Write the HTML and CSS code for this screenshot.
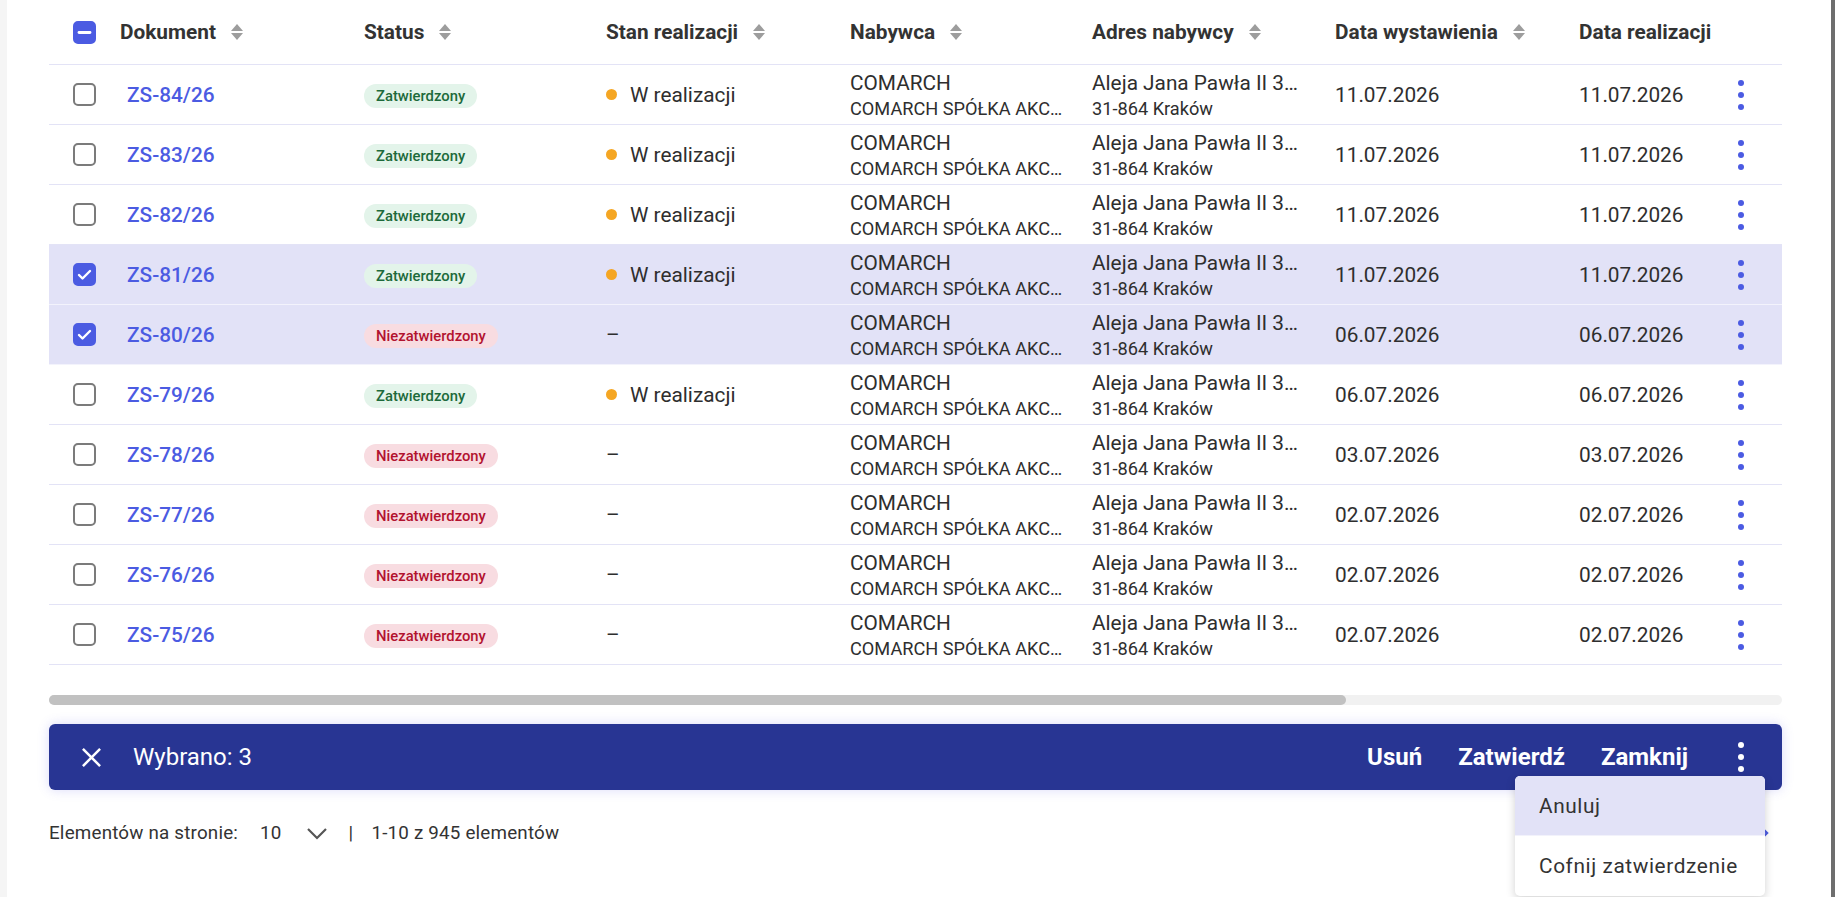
FILE: index.html
```html
<!DOCTYPE html>
<html lang="pl">
<head>
  <meta charset="UTF-8" />
  <meta name="viewport" content="width=device-width, initial-scale=1" />
  <title>Zamówienia sprzedaży</title>
  <link rel="stylesheet" href="styles.css">
</head>
<body>
<div class="page">
  <div class="side-left"></div>

  <main class="content">
    <div class="table">
      <div class="row head">
        <div class="cell check"><span class="cb partial"><svg viewBox="0 0 23 23"><path d="M6 11.5h11" /></svg></span></div>
        <div class="cell th">Dokument <svg class="sort" viewBox="0 0 14 20"><path d="M7 2l6 7H1z" /><path d="M7 18l6-7H1z" /></svg></div>
        <div class="cell th">Status <svg class="sort" viewBox="0 0 14 20"><path d="M7 2l6 7H1z" /><path d="M7 18l6-7H1z" /></svg></div>
        <div class="cell th">Stan realizacji <svg class="sort" viewBox="0 0 14 20"><path d="M7 2l6 7H1z" /><path d="M7 18l6-7H1z" /></svg></div>
        <div class="cell th">Nabywca <svg class="sort" viewBox="0 0 14 20"><path d="M7 2l6 7H1z" /><path d="M7 18l6-7H1z" /></svg></div>
        <div class="cell th">Adres nabywcy <svg class="sort" viewBox="0 0 14 20"><path d="M7 2l6 7H1z" /><path d="M7 18l6-7H1z" /></svg></div>
        <div class="cell th">Data wystawienia <svg class="sort" viewBox="0 0 14 20"><path d="M7 2l6 7H1z" /><path d="M7 18l6-7H1z" /></svg></div>
        <div class="cell th nowrap">Data realizacji</div>
        <div class="cell"></div>
      </div>

      <div class="row">
        <div class="cell check"><span class="cb"></span></div>
        <div class="cell"><a class="doc" href="#">ZS-84/26</a></div>
        <div class="cell"><span class="badge ok">Zatwierdzony</span></div>
        <div class="cell stan"><span class="dot"></span>W realizacji</div>
        <div class="cell two"><div class="main">COMARCH</div><div class="sub">COMARCH SPÓŁKA AKCYJNA</div></div>
        <div class="cell two"><div class="main">Aleja Jana Pawła II 39a</div><div class="sub">31-864 Kraków</div></div>
        <div class="cell date">11.07.2026</div>
        <div class="cell date">11.07.2026</div>
        <div class="cell kebab"><svg viewBox="0 0 6 30"><circle cx="3" cy="3" r="3" /><circle cx="3" cy="15" r="3" /><circle cx="3" cy="27" r="3" /></svg></div>
      </div>

      <div class="row">
        <div class="cell check"><span class="cb"></span></div>
        <div class="cell"><a class="doc" href="#">ZS-83/26</a></div>
        <div class="cell"><span class="badge ok">Zatwierdzony</span></div>
        <div class="cell stan"><span class="dot"></span>W realizacji</div>
        <div class="cell two"><div class="main">COMARCH</div><div class="sub">COMARCH SPÓŁKA AKCYJNA</div></div>
        <div class="cell two"><div class="main">Aleja Jana Pawła II 39a</div><div class="sub">31-864 Kraków</div></div>
        <div class="cell date">11.07.2026</div>
        <div class="cell date">11.07.2026</div>
        <div class="cell kebab"><svg viewBox="0 0 6 30"><circle cx="3" cy="3" r="3" /><circle cx="3" cy="15" r="3" /><circle cx="3" cy="27" r="3" /></svg></div>
      </div>

      <div class="row">
        <div class="cell check"><span class="cb"></span></div>
        <div class="cell"><a class="doc" href="#">ZS-82/26</a></div>
        <div class="cell"><span class="badge ok">Zatwierdzony</span></div>
        <div class="cell stan"><span class="dot"></span>W realizacji</div>
        <div class="cell two"><div class="main">COMARCH</div><div class="sub">COMARCH SPÓŁKA AKCYJNA</div></div>
        <div class="cell two"><div class="main">Aleja Jana Pawła II 39a</div><div class="sub">31-864 Kraków</div></div>
        <div class="cell date">11.07.2026</div>
        <div class="cell date">11.07.2026</div>
        <div class="cell kebab"><svg viewBox="0 0 6 30"><circle cx="3" cy="3" r="3" /><circle cx="3" cy="15" r="3" /><circle cx="3" cy="27" r="3" /></svg></div>
      </div>

      <div class="row selected">
        <div class="cell check"><span class="cb on"><svg viewBox="0 0 23 23"><path d="M6 12l3.5 3.5L17 8" /></svg></span></div>
        <div class="cell"><a class="doc" href="#">ZS-81/26</a></div>
        <div class="cell"><span class="badge ok">Zatwierdzony</span></div>
        <div class="cell stan"><span class="dot"></span>W realizacji</div>
        <div class="cell two"><div class="main">COMARCH</div><div class="sub">COMARCH SPÓŁKA AKCYJNA</div></div>
        <div class="cell two"><div class="main">Aleja Jana Pawła II 39a</div><div class="sub">31-864 Kraków</div></div>
        <div class="cell date">11.07.2026</div>
        <div class="cell date">11.07.2026</div>
        <div class="cell kebab"><svg viewBox="0 0 6 30"><circle cx="3" cy="3" r="3" /><circle cx="3" cy="15" r="3" /><circle cx="3" cy="27" r="3" /></svg></div>
      </div>

      <div class="row selected">
        <div class="cell check"><span class="cb on"><svg viewBox="0 0 23 23"><path d="M6 12l3.5 3.5L17 8" /></svg></span></div>
        <div class="cell"><a class="doc" href="#">ZS-80/26</a></div>
        <div class="cell"><span class="badge no">Niezatwierdzony</span></div>
        <div class="cell stan">–</div>
        <div class="cell two"><div class="main">COMARCH</div><div class="sub">COMARCH SPÓŁKA AKCYJNA</div></div>
        <div class="cell two"><div class="main">Aleja Jana Pawła II 39a</div><div class="sub">31-864 Kraków</div></div>
        <div class="cell date">06.07.2026</div>
        <div class="cell date">06.07.2026</div>
        <div class="cell kebab"><svg viewBox="0 0 6 30"><circle cx="3" cy="3" r="3" /><circle cx="3" cy="15" r="3" /><circle cx="3" cy="27" r="3" /></svg></div>
      </div>

      <div class="row">
        <div class="cell check"><span class="cb"></span></div>
        <div class="cell"><a class="doc" href="#">ZS-79/26</a></div>
        <div class="cell"><span class="badge ok">Zatwierdzony</span></div>
        <div class="cell stan"><span class="dot"></span>W realizacji</div>
        <div class="cell two"><div class="main">COMARCH</div><div class="sub">COMARCH SPÓŁKA AKCYJNA</div></div>
        <div class="cell two"><div class="main">Aleja Jana Pawła II 39a</div><div class="sub">31-864 Kraków</div></div>
        <div class="cell date">06.07.2026</div>
        <div class="cell date">06.07.2026</div>
        <div class="cell kebab"><svg viewBox="0 0 6 30"><circle cx="3" cy="3" r="3" /><circle cx="3" cy="15" r="3" /><circle cx="3" cy="27" r="3" /></svg></div>
      </div>

      <div class="row">
        <div class="cell check"><span class="cb"></span></div>
        <div class="cell"><a class="doc" href="#">ZS-78/26</a></div>
        <div class="cell"><span class="badge no">Niezatwierdzony</span></div>
        <div class="cell stan">–</div>
        <div class="cell two"><div class="main">COMARCH</div><div class="sub">COMARCH SPÓŁKA AKCYJNA</div></div>
        <div class="cell two"><div class="main">Aleja Jana Pawła II 39a</div><div class="sub">31-864 Kraków</div></div>
        <div class="cell date">03.07.2026</div>
        <div class="cell date">03.07.2026</div>
        <div class="cell kebab"><svg viewBox="0 0 6 30"><circle cx="3" cy="3" r="3" /><circle cx="3" cy="15" r="3" /><circle cx="3" cy="27" r="3" /></svg></div>
      </div>

      <div class="row">
        <div class="cell check"><span class="cb"></span></div>
        <div class="cell"><a class="doc" href="#">ZS-77/26</a></div>
        <div class="cell"><span class="badge no">Niezatwierdzony</span></div>
        <div class="cell stan">–</div>
        <div class="cell two"><div class="main">COMARCH</div><div class="sub">COMARCH SPÓŁKA AKCYJNA</div></div>
        <div class="cell two"><div class="main">Aleja Jana Pawła II 39a</div><div class="sub">31-864 Kraków</div></div>
        <div class="cell date">02.07.2026</div>
        <div class="cell date">02.07.2026</div>
        <div class="cell kebab"><svg viewBox="0 0 6 30"><circle cx="3" cy="3" r="3" /><circle cx="3" cy="15" r="3" /><circle cx="3" cy="27" r="3" /></svg></div>
      </div>

      <div class="row">
        <div class="cell check"><span class="cb"></span></div>
        <div class="cell"><a class="doc" href="#">ZS-76/26</a></div>
        <div class="cell"><span class="badge no">Niezatwierdzony</span></div>
        <div class="cell stan">–</div>
        <div class="cell two"><div class="main">COMARCH</div><div class="sub">COMARCH SPÓŁKA AKCYJNA</div></div>
        <div class="cell two"><div class="main">Aleja Jana Pawła II 39a</div><div class="sub">31-864 Kraków</div></div>
        <div class="cell date">02.07.2026</div>
        <div class="cell date">02.07.2026</div>
        <div class="cell kebab"><svg viewBox="0 0 6 30"><circle cx="3" cy="3" r="3" /><circle cx="3" cy="15" r="3" /><circle cx="3" cy="27" r="3" /></svg></div>
      </div>

      <div class="row">
        <div class="cell check"><span class="cb"></span></div>
        <div class="cell"><a class="doc" href="#">ZS-75/26</a></div>
        <div class="cell"><span class="badge no">Niezatwierdzony</span></div>
        <div class="cell stan">–</div>
        <div class="cell two"><div class="main">COMARCH</div><div class="sub">COMARCH SPÓŁKA AKCYJNA</div></div>
        <div class="cell two"><div class="main">Aleja Jana Pawła II 39a</div><div class="sub">31-864 Kraków</div></div>
        <div class="cell date">02.07.2026</div>
        <div class="cell date">02.07.2026</div>
        <div class="cell kebab"><svg viewBox="0 0 6 30"><circle cx="3" cy="3" r="3" /><circle cx="3" cy="15" r="3" /><circle cx="3" cy="27" r="3" /></svg></div>
      </div>
    </div>

    <!-- horizontal scroll of the table -->
    <div class="hscroll"><div class="thumb"></div></div>

    <!-- selection bar -->
    <div class="selbar">
      <svg class="close" viewBox="0 0 22 22"><path d="M2 2l18 18M20 2L2 20" /></svg>
      <span class="selcount">Wybrano: 3</span>
      <div class="actions">
        <button class="act">Usuń</button>
        <button class="act">Zatwierdź</button>
        <button class="act">Zamknij</button>
        <button class="act more"><svg viewBox="0 0 6 30"><circle cx="3" cy="3" r="3" /><circle cx="3" cy="15" r="3" /><circle cx="3" cy="27" r="3" /></svg></button>
      </div>

      <div class="menu">
        <div class="mi active">Anuluj</div>
        <div class="mi">Cofnij zatwierdzenie</div>
      </div>
    </div>

    <div class="footer">
      <span>Elementów na stronie:</span>
      <span class="per">10</span>
      <svg class="chev" viewBox="0 0 22 14"><path d="M2 3l9 9 9-9" /></svg>
      <span class="sep">|</span>
      <span class="range">1-10 z 945 elementów</span>
      <div class="pager">
        <span class="pg-text">Strona 1 z 95</span>
        <svg class="pg-next" viewBox="0 0 10 16"><path d="M2 2l6 6-6 6" /></svg>
      </div>
    </div>
  </main>

  <div class="side-right"></div>
</div>
</body>
</html>
```

FILE: styles.css
```css
body {
  margin: 0;
  font-family: Roboto, "Noto Sans", sans-serif;
  color: #2e2e2e;
  background: #fff;
}

.page {
  display: flex;
  height: 897px;
  overflow: hidden;
}
.side-left {
  width: 7px;
  background: #f5f5f5;
}
.side-right {
  width: 4px;
  background: #6e6e6e;
}
.content {
  flex: 1;
  padding: 0 49px 0 42px;
}

/* table */
.row {
  display: grid;
  grid-template-columns: 71px 244px 242px 244px 242px 243px 244px 136px 52px 1fr;
  align-items: center;
  height: 59px;
  border-bottom: 1px solid #e3e3f6;
  font-size: 20.8px;
}
.row.head {
  height: 64px;
}
.row.selected {
  background: #e2e2f7;
  border-bottom-color: #f3f3fc;
}
.cell {
  min-width: 0;
}
.check {
  padding-left: 24px;
  display: flex;
}
.cb {
  width: 23px;
  height: 23px;
  box-sizing: border-box;
  border: 2px solid #7b7b7b;
  border-radius: 5px;
  display: block;
}
.cb svg {
  display: block;
  width: 23px;
  height: 23px;
  margin: -2px;
  fill: none;
  stroke: #fff;
  stroke-width: 2.4;
  stroke-linecap: round;
  stroke-linejoin: round;
}
.cb.on,
.cb.partial {
  background: #4b5be2;
  border-color: #4b5be2;
}
.cb.partial svg {
  stroke-width: 2.8;
}

.th {
  display: flex;
  align-items: center;
  gap: 14px;
  font-weight: 700;
  color: #333;
}
.nowrap {
  white-space: nowrap;
}
.sort {
  width: 14px;
  height: 20px;
  fill: #9d9d9d;
}

a.doc {
  color: #4b5be2;
  font-weight: 500;
  text-decoration: none;
  padding-left: 7px;
}

.badge {
  display: inline-block;
  font-size: 14.8px;
  font-weight: 500;
  line-height: 18px;
  padding: 3px 12px;
  border-radius: 13px;
}
.badge.ok {
  background: #e3f4ea;
  color: #1d6a3b;
}
.badge.no {
  background: #f8dce1;
  color: #b2132f;
}

.stan {
  display: flex;
  align-items: center;
  gap: 13px;
}
.dot {
  width: 11px;
  height: 11px;
  border-radius: 50%;
  background: #f5a623;
}

.two {
  padding-top: 2px;
}
.two .main,
.two .sub {
  white-space: nowrap;
  overflow: hidden;
  text-overflow: ellipsis;
}
.two .main {
  max-width: 212px;
  line-height: 26px;
}
.two .sub {
  max-width: 222px;
  font-size: 18.2px;
  line-height: 26px;
}

.kebab {
  display: flex;
  justify-content: center;
}
.kebab svg {
  width: 6px;
  height: 30px;
  fill: #4b5be2;
}

/* horizontal scrollbar */
.hscroll {
  margin-top: 30px;
  height: 10px;
  border-radius: 5px;
  background: #f1f1f1;
}
.hscroll .thumb {
  width: 1297px;
  height: 10px;
  border-radius: 5px;
  background: #c1c1c1;
}

/* selection bar */
.selbar {
  position: relative;
  margin-top: 19px;
  height: 66px;
  display: flex;
  align-items: center;
  padding: 0 17px 0 32px;
  background: #283593;
  border-radius: 6px;
  box-shadow: 0 0 12px rgba(90, 90, 230, 0.22);
  color: #fff;
}
.close {
  width: 21px;
  height: 21px;
  fill: none;
  stroke: #fff;
  stroke-width: 2.6;
}
.selcount {
  margin-left: 31px;
  font-size: 24px;
}
.actions {
  margin-left: auto;
  display: flex;
  align-items: center;
}
.act {
  background: none;
  border: 0;
  color: #fff;
  font-family: inherit;
  font-size: 24px;
  font-weight: 700;
  padding: 0 18px;
  cursor: pointer;
}
.act.more {
  width: 48px;
  margin-left: 11px;
  padding: 0;
  display: flex;
  justify-content: center;
}
.act.more svg {
  width: 6px;
  height: 30px;
  fill: #fff;
}

.menu {
  position: absolute;
  top: 52px;
  right: 17px;
  width: 250px;
  background: #fff;
  border-radius: 5px;
  box-shadow: 0 3px 10px rgba(0, 0, 0, 0.18);
  overflow: hidden;
  z-index: 5;
}
.mi {
  height: 60px;
  display: flex;
  align-items: center;
  padding-left: 24px;
  font-size: 20.8px;
  letter-spacing: 0.6px;
  color: #333;
}
.mi.active {
  background: #e2e2f7;
  border-bottom: 1px solid #f2f2fb;
  height: 59px;
}

/* footer */
.footer {
  height: 86px;
  display: flex;
  align-items: center;
  font-size: 18.8px;
  letter-spacing: 0.2px;
  color: #333;
}
.per {
  margin-left: 22px;
}
.chev {
  margin-left: 24px;
  width: 22px;
  height: 14px;
  fill: none;
  stroke: #555;
  stroke-width: 2.2;
}
.sep {
  margin-left: 21px;
}
.range {
  margin-left: 18px;
}
.pager {
  margin-left: auto;
  margin-right: 13px;
  display: flex;
  align-items: center;
  gap: 90px;
}
.pg-next {
  width: 10px;
  height: 16px;
  fill: none;
  stroke: #4b5be2;
  stroke-width: 2.4;
}
```
